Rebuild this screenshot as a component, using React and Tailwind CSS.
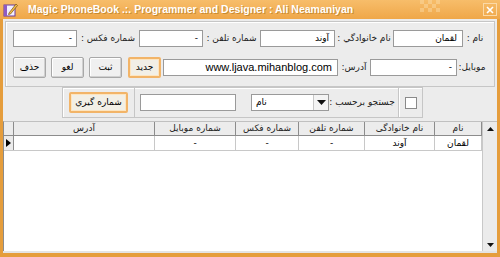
import { useState } from 'react'

const fa = { fontFamily: '"DejaVu Sans", "Noto Sans", sans-serif' }

const Combo = ({ w, value = '-', arrow = false }) =>
  arrow ? (
    <div
      className={`${w} h-[17px] bg-white border border-[#9a9a9a] flex items-center text-[9px] text-black`}
      style={fa}
    >
      <span dir="rtl" className="flex-1 pl-[4px] text-left">{value}</span>
      <span className="w-[15px] h-full flex items-center justify-center border-l border-[#c8c8c8] bg-[#f4f4f4]">
        <svg width="9" height="5" viewBox="0 0 9 5"><path d="M0 0h9L4.5 5z" fill="#111" /></svg>
      </span>
    </div>
  ) : (
    <div
      className={`${w} h-[17px] bg-white border border-[#9a9a9a] flex items-center justify-end pr-[4px] text-[9px] text-black`}
      style={fa}
    >
      {value}
    </div>
  )

const Input = ({ w, value = '', ltr = false }) => (
  <div
    dir="rtl"
    className={`${w} h-[17px] bg-white border border-[#9a9a9a] flex items-center justify-start pr-[5px] text-[9px] text-black whitespace-nowrap overflow-hidden`}
    style={ltr ? { fontFamily: '"Liberation Sans", Arial, sans-serif', fontSize: 11 } : fa}
  >
    <span dir={ltr ? 'ltr' : 'rtl'}>{value}</span>
  </div>
)

const Label = ({ w, children }) => (
  <div dir="rtl" className={`${w} text-center text-[9px] text-[#222] whitespace-nowrap`} style={fa}>
    {children}
  </div>
)

const Btn = ({ w, children, active = false }) => (
  <div
    dir="rtl"
    className={`${w} h-[21px] flex items-center justify-center text-[9px] text-black rounded-[2px] whitespace-nowrap ${
      active
        ? 'border-2 border-[#f2b468] bg-[#f2efe6] shadow-[inset_0_0_0_1px_#fde5c0]'
        : 'border border-[#a8a8a8] bg-[#f0f0f0] shadow-[inset_-1px_-1px_0_#d0d0d0,inset_1px_1px_0_#ffffff]'
    }`}
    style={fa}
  >
    {children}
  </div>
)

const columns = [
  { key: 'address', title: 'آدرس', w: 'w-[141px]' },
  { key: 'mobile', title: 'شماره موبایل', w: 'w-[81px]' },
  { key: 'fax', title: 'شماره فکس', w: 'w-[63px]' },
  { key: 'phone', title: 'شماره تلفن', w: 'w-[66px]' },
  { key: 'family', title: 'نام خانوادگی', w: 'w-[70px]' },
  { key: 'name', title: 'نام', w: 'w-[47px]' },
]

const rows = [{ address: '', mobile: '-', fax: '-', phone: '-', family: 'آوند', name: 'لقمان' }]

export default function App() {
  const [checked, setChecked] = useState(false)

  return (
    <div className="w-[500px] h-[257px] bg-[#e59d3c] flex flex-col overflow-hidden">
      {/* title bar */}
      <div className="h-[19px] flex items-center bg-gradient-to-b from-[#f7bd6a] to-[#efa748] relative">
        <svg className="ml-[3px]" width="15" height="15" viewBox="0 0 15 15">
          <rect x="1" y="3" width="11" height="11" fill="#f4f0ff" stroke="#6a3c9a" />
          <rect x="1" y="3" width="3" height="11" fill="#8e5cc4" />
          <path d="M6 11 L13 2 L14.5 3.5 L7.5 12 L5.5 12.5 Z" fill="#f2c24a" stroke="#7a4a10" strokeWidth="0.7" />
        </svg>
        <span
          className="ml-[10px] text-white font-bold text-[10.5px] whitespace-nowrap [text-shadow:1px_1px_0_#c98a30]"
          style={{ fontFamily: '"Liberation Sans", Arial, sans-serif' }}
        >
          Magic PhoneBook .:. Programmer and Designer : Ali Neamaniyan
        </span>
        <div className="absolute left-[420px] top-0 grid grid-cols-5 gap-0 opacity-50">
          {[...Array(15)].map((_, i) => (
            <div key={i} className={`w-[4px] h-[4px] ${i % 2 === 0 ? 'bg-[#fbd9a2]' : ''}`} />
          ))}
        </div>
        <div className="absolute right-[3px] top-[3px] w-[14px] h-[13px] border border-[#fbd9a6] flex items-center justify-center">
          <svg width="8" height="8" viewBox="0 0 8 8">
            <path d="M1 1L7 7M7 1L1 7" stroke="#fff" strokeWidth="1.6" />
          </svg>
        </div>
      </div>

      {/* body */}
      <div className="flex-1 mx-[3px] bg-[#ececec] flex flex-col">
        {/* edit group */}
        <div className="mx-[2px] mt-[2px] h-[66px] border border-[#c6c6c6] shadow-[inset_1px_1px_0_#ffffff] flex flex-col pl-[7px] pt-[8px]">
          <div className="flex items-center h-[17px]">
            <Combo w="w-[64px]" />
            <Label w="w-[62px]">شماره فکس :</Label>
            <Combo w="w-[64px]" />
            <Label w="w-[57px]">شماره تلفن :</Label>
            <Input w="w-[75px]" value="آوند" />
            <Label w="w-[58px]">نام خانوادگي :</Label>
            <Input w="w-[70px]" value="لقمان" />
            <Label w="w-[24px]">نام :</Label>
          </div>
          <div className="flex items-center h-[21px] mt-[10px]">
            <Btn w="w-[33px]">حذف</Btn>
            <div className="w-[5px]" />
            <Btn w="w-[33px]">لغو</Btn>
            <div className="w-[5px]" />
            <Btn w="w-[33px]">ثبت</Btn>
            <div className="w-[6px]" />
            <Btn w="w-[33px]" active>جدید</Btn>
            <div className="w-[2px]" />
            <Input w="w-[175px]" value="www.ljava.mihanblog.com" ltr />
            <Label w="w-[32px]">آدرس:</Label>
            <Combo w="w-[87px]" />
            <Label w="w-[30px]">موبایل:</Label>
          </div>
        </div>

        {/* search group */}
        <div className="ml-[59px] w-[361px] h-[31px] flex">
          <div className="w-[73px] h-full border border-[#c6c6c6] shadow-[inset_1px_1px_0_#ffffff] flex items-center justify-center">
            <Btn w="w-[59px]" active>شماره گيري</Btn>
          </div>
          <div className="w-[263px] h-full border-y border-[#c6c6c6] shadow-[inset_0_1px_0_#ffffff] flex items-center pl-[5px]">
            <Input w="w-[96px]" />
            <div className="w-[15px]" />
            <Combo w="w-[78px]" value="نام" arrow />
            <Label w="w-[66px]">جستجو برحسب :</Label>
          </div>
          <div className="w-[25px] h-full border border-[#c6c6c6] shadow-[inset_1px_1px_0_#ffffff] flex items-center justify-center">
            <button
              onClick={() => setChecked(!checked)}
              className="w-[12px] h-[12px] bg-white border border-[#8a8a8a] flex items-center justify-center"
            >
              {checked && <span className="text-[9px] leading-none">✓</span>}
            </button>
          </div>
        </div>

        {/* grid */}
        <div className="mt-[3px] flex-1 bg-white border-l border-[#8c8c8c] border-t border-t-[#c0c0c0] flex">
          <div className="flex-1 flex flex-col">
            <div className="flex h-[14px] bg-[#ececec] border-b border-[#8c8c8c]">
              <div className="w-[10px] border-r border-[#8c8c8c]" />
              {columns.map((c) => (
                <div
                  key={c.key}
                  dir="rtl"
                  className={`${c.w} border-r border-[#8c8c8c] text-center text-[9px] leading-[13px] text-[#222] whitespace-nowrap`}
                  style={fa}
                >
                  {c.title}
                </div>
              ))}
            </div>
            {rows.map((r, i) => (
              <div key={i} className="flex h-[15px] border-b border-[#c8c8c8]">
                <div className="w-[10px] border-r border-[#8c8c8c] bg-[#ececec] flex items-center justify-center">
                  <svg width="5" height="8" viewBox="0 0 5 8"><path d="M0 0L5 4L0 8z" fill="#000" /></svg>
                </div>
                {columns.map((c) => (
                  <div
                    key={c.key}
                    dir="rtl"
                    className={`${c.w} border-r border-[#c8c8c8] text-center text-[9px] leading-[14px] text-black`}
                    style={fa}
                  >
                    {r[c.key]}
                  </div>
                ))}
              </div>
            ))}
          </div>
          <div className="w-[15px] bg-[#ebebeb] border-l border-[#c8c8c8] flex flex-col justify-between">
            <div className="h-[14px] flex items-center justify-center">
              <svg width="7" height="4" viewBox="0 0 7 4"><path d="M0 4L3.5 0L7 4z" fill="#111" /></svg>
            </div>
            <div className="h-[12px] flex items-center justify-center">
              <svg width="7" height="4" viewBox="0 0 7 4"><path d="M0 0L3.5 4L7 0z" fill="#111" /></svg>
            </div>
          </div>
        </div>
        <div className="h-[2px] bg-[#e4e4e4]" />
      </div>
      <div className="h-[4px]" />
    </div>
  )
}
